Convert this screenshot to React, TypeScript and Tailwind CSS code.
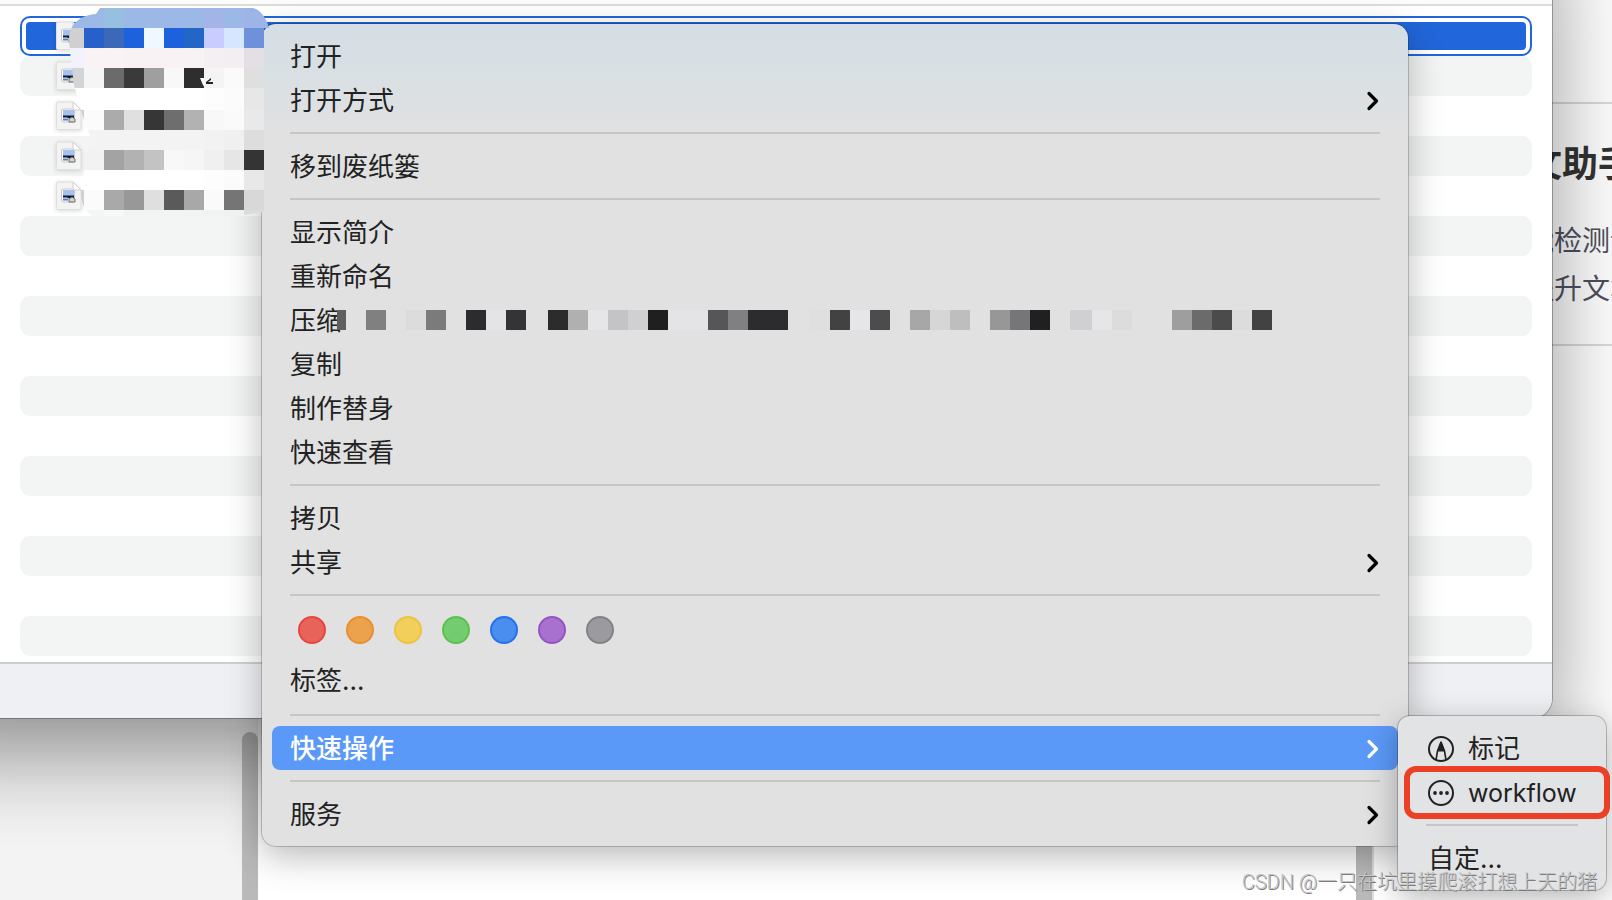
import type { ReactNode } from 'react';

const LIST_ROWS = 16;
const FILE_ROWS = 5;

const MOSAIC = [
  { y: 8, h: 20, cells: ['#9cb8e6', '#9cb8e6', '#96bfe0', '#9cb8e6', '#9cb8e6', '#9cb8e6', '#9cb8e6', '#a3b5e6', '#9cb8e6', '#9cb5e6'] },
  { y: 28, h: 20, cells: ['#d2cfd2', '#2660c8', '#3c68b8', '#1d61dc', '#f0f8ff', '#1d61dc', '#2466c6', '#c9ccff', '#d6e6ff', '#6f90da'] },
  { y: 48, h: 20, cells: ['#f2f2fd', '#f9f3f6', '#f9f3f6', '#f8f2f5', '#f8f2f5', '#f8f2f5', '#f7f2f4', '#f4eff2', '#f2eef1', '#e4dfe4'] },
  { y: 68, h: 20, cells: ['#d3d4d6', '#f5f5f5', '#6b6b6b', '#3a3a3a', '#9f9f9f', '#f8f8f8', '#2e2e2e', '#f4f4f4', '#fafafa', '#dfdfdf'] },
  { y: 88, h: 22, cells: ['#ffffff', '#ffffff', '#ffffff', '#ffffff', '#ffffff', '#ffffff', '#ffffff', '#fdfdfd', '#fbfbfb', '#e7e7e7'] },
  { y: 110, h: 20, cells: ['#cfcfcf', '#fbfbfb', '#ababab', '#e0e0e0', '#363636', '#6e6e6e', '#b2b2b2', '#f8f8f8', '#fafafa', '#e9e9e9'] },
  { y: 130, h: 20, cells: ['#f3f3f3', '#f3f3f3', '#f3f3f3', '#f3f3f3', '#f3f3f3', '#f3f3f3', '#f3f3f3', '#f2f2f2', '#f0f0f0', '#dddddd'] },
  { y: 150, h: 20, cells: ['#f2f2f2', '#f2f2f2', '#a3a3a3', '#b2b2b2', '#c3c3c3', '#f8f8f8', '#f6f6f6', '#f0f0f0', '#e6e6e6', '#343434'] },
  { y: 170, h: 20, cells: ['#ffffff', '#ffffff', '#ffffff', '#ffffff', '#ffffff', '#ffffff', '#ffffff', '#fdfdfd', '#fbfbfb', '#e8e8e8'] },
  { y: 190, h: 20, cells: ['#d0d0d0', '#fbfbfb', '#a9a9a9', '#989898', '#dfdfdf', '#5a5a5a', '#a8a8a8', '#fafafa', '#757575', '#d8d8d8'] },
  { y: 210, h: 6, cells: ['#f3f3f3', '#f5f5f5', '#f8f8f8', '#f3f3f3', '#f3f3f3', '#f3f3f3', '#f3f3f3', '#f2f2f2', '#f0f0f0', '#dcdcdc'] },
];

// x, width, fill
const STRIP: [number, number, string][] = [
  [0, 9, '#5f5f60'],
  [29, 20, '#808081'],
  [69, 20, '#dcdcdd'],
  [89, 20, '#7b7b7c'],
  [129, 20, '#2c2c2e'],
  [149, 20, '#e4e4e6'],
  [169, 20, '#343436'],
  [211, 20, '#2c2c2e'],
  [231, 20, '#b0b0b1'],
  [251, 20, '#e6e6e8'],
  [271, 20, '#c4c4c6'],
  [291, 20, '#d0d0d2'],
  [311, 20, '#1f1f20'],
  [331, 40, '#e4e4e6'],
  [371, 20, '#565658'],
  [391, 20, '#808082'],
  [411, 40, '#2c2c2e'],
  [473, 20, '#dfdfe0'],
  [493, 20, '#424243'],
  [513, 20, '#e6e6e8'],
  [533, 20, '#4c4c4e'],
  [573, 20, '#a7a7a8'],
  [593, 20, '#d6d6d7'],
  [613, 20, '#bebec0'],
  [653, 20, '#979798'],
  [673, 20, '#767678'],
  [693, 20, '#202022'],
  [733, 22, '#d0d0d2'],
  [755, 20, '#e6e6e8'],
  [775, 20, '#dcdcdd'],
  [835, 20, '#9e9e9f'],
  [855, 20, '#6b6b6d'],
  [875, 20, '#4b4b4c'],
  [895, 20, '#dcdcdd'],
  [915, 20, '#424243'],
];

const TAGS = [
  { name: '红色', color: 'bg-[#e8645a] border-[#e5483a]' },
  { name: '橙色', color: 'bg-[#eba24c] border-[#e98f31]' },
  { name: '黄色', color: 'bg-[#f1cf5a] border-[#eec344]' },
  { name: '绿色', color: 'bg-[#73cd70] border-[#5cc24f]' },
  { name: '蓝色', color: 'bg-[#4a8ef0] border-[#2871ee]' },
  { name: '紫色', color: 'bg-[#a971cf] border-[#9653c4]' },
  { name: '灰色', color: 'bg-[#9b9a9f] border-[#838387]' },
];

function FileIcon() {
  return (
    <svg width="26" height="30" viewBox="0 0 26 30" className="drop-shadow-sm" aria-hidden="true">
      <path d="M1.5 1h15.500L25 9v18.500a1 1 0 0 1-1 1H1.500a1 1 0 0 1-1-1V2a1 1 0 0 1 1-1z" fill="#f3f3f3" stroke="#dedede" />
      <path d="M17 1v7a1 1 0 0 0 1 1h7z" fill="#ffffff" stroke="#d0d0d0" />
      <rect x="5.500" y="8" width="13" height="13" rx="2" fill="#fafafa" stroke="#c9c9c9" />
      <rect x="7" y="9" width="11" height="6" fill="#a3c3ee" />
      <path d="M7 14.500h11v3h-5l-2-1H7z" fill="#10182c" />
      <path d="M7 17.500h5v2H7z" fill="#5b81bf" />
      <path d="M13 18l3-2 3 2v3h-6z" fill="#d4d4d4" stroke="#6f6f6f" strokeWidth="1" />
    </svg>
  );
}

function Chevron() {
  return (
    <svg width="14" height="20" viewBox="0 0 14 20" fill="none" aria-hidden="true">
      <path d="M3 2.500l7.500 7.500L3 17.500" stroke="currentColor" strokeWidth="3.200" strokeLinecap="round" strokeLinejoin="round" />
    </svg>
  );
}

function MarkupIcon() {
  return (
    <svg width="26" height="26" viewBox="0 0 26 26" fill="none" stroke="currentColor" aria-hidden="true">
      <circle cx="13" cy="13" r="12" strokeWidth="2" />
      <path d="M8 24l1.500-9L13 6l3.500 9L18 24" strokeWidth="1.600" strokeLinejoin="round" />
      <path d="M9.500 15L13 6l3.500 9z" fill="currentColor" strokeWidth="1" />
    </svg>
  );
}

function MoreIcon() {
  return (
    <svg width="26" height="26" viewBox="0 0 26 26" fill="currentColor" aria-hidden="true">
      <circle cx="13" cy="13" r="12" fill="none" stroke="currentColor" strokeWidth="2" />
      <circle cx="7" cy="13" r="1.900" />
      <circle cx="13" cy="13" r="1.900" />
      <circle cx="19" cy="13" r="1.900" />
    </svg>
  );
}

function MenuItem({ children, arrow, active }: { children: ReactNode; arrow?: boolean; active?: boolean }) {
  return (
    <button
      type="button"
      role="menuitem"
      className={`relative flex h-11 w-full items-center rounded-lg px-[18px] pt-0.5 text-left ${
        active ? 'bg-[#5b99f8] font-medium text-white' : ''
      }`}
    >
      {children}
      {arrow && (
        <span className={`ml-auto ${active ? 'text-white' : 'text-black'}`}>
          <Chevron />
        </span>
      )}
    </button>
  );
}

function Separator() {
  return <hr className="mx-[18px] my-[10px] h-0.5 border-0 bg-[#c6c6c6]" />;
}

function BackgroundPage() {
  return (
    <div className="flex h-full">
      <div className="flex w-[258px] shrink-0 justify-end bg-[#f3f3f3] pt-[732px]">
        <div className="w-4 rounded-t-full bg-[#b9b9b9]" />
      </div>
      <div className="flex-1 bg-white" />
      <div className="w-[18px] border-r-2 border-[#dedede] bg-[#b9b9b9]" />
      <div className="w-[238px] shrink-0 overflow-hidden whitespace-nowrap bg-white pt-[102px]">
        <section className="h-[244px] border-y-2 border-[#d9d9de] pt-9 pl-[152px]">
          <h2 className="text-[36px] leading-[48px] font-bold text-[#333333]">文助手</h2>
          <p className="mt-[29px] text-[28px] leading-[48px] text-[#4f4f60]">
            能检测语
            <br />
            提升文本
          </p>
        </section>
      </div>
    </div>
  );
}

// The window runs past the top and left edges of the screen.
function FinderWindow() {
  return (
    <div className="absolute -top-24 right-[60px] -left-24 overflow-hidden rounded-br-[20px] bg-white pt-24 shadow-[0_0_0_1px_rgba(0,0,0,0.28),0_36px_90px_rgba(0,0,0,0.42)]">
      <div className="h-1.5 border-b-2 border-[#dcdcdc] bg-[#fcfcfc]" />
      <ul className="pt-[10px] pr-5 pb-1.5 pl-[116px]">
        {Array.from({ length: LIST_ROWS }, (_, i) => (
          <li
            key={i}
            className={`h-10 rounded-[10px] ${
              i === 0 ? 'border-2 border-[#2166da] p-1' : i % 2 === 1 ? 'bg-[#f3f5f5]' : ''
            }`}
          >
            {i === 0 ? (
              <div className="flex h-full items-center rounded bg-[#2166da] pl-[30px]">
                <FileIcon />
              </div>
            ) : (
              i < FILE_ROWS && (
                <div className="flex h-full items-center pl-9">
                  <FileIcon />
                </div>
              )
            )}
          </li>
        ))}
      </ul>
      <div className="h-14 border-t-2 border-[#cfcfd3] bg-[#eff0f3]" />
    </div>
  );
}

function NameMosaic() {
  return (
    <svg width="270" height="216" viewBox="0 0 270 216" className="pointer-events-none absolute top-0 left-0" aria-hidden="true">
      <defs>
        <clipPath id="blob">
          <path d="M100 8H253C260 10 266 17 269 28H264V212L240 216H92C84 210 81 203 81 192C81 183 82 178 84 172L90 136C85 124 82 114 79 104C77 94 74 88 73 78C73 70 71 65 71 60C70 52 69 45 69 38C70 24 80 15 96 14Z" />
        </clipPath>
      </defs>
      <g clipPath="url(#blob)" shapeRendering="crispEdges">
        {MOSAIC.map((row) =>
          row.cells.map((fill, i) => (
            <rect
              key={`${row.y}-${i}`}
              x={64 + i * 20}
              y={row.y}
              width={i === 9 && row.y === 8 ? 26 : 20}
              height={row.h}
              fill={fill}
            />
          ))
        )}
      </g>
      <path d="M200 78h4l1 10-2-3z" fill="#ffffff" />
      <path d="M206 82l5-4v2l-3 2h5v2h-7z" fill="#222222" />
    </svg>
  );
}

function ContextMenu() {
  return (
    <div
      role="menu"
      className="absolute top-6 right-[204px] left-[262px] rounded-[14px] bg-[#e1e1e1] bg-[linear-gradient(to_bottom,#d5dde5_0px,#d9e0e3_50px,#e1e1e2_110px)] bg-no-repeat p-[10px] text-[#222222] shadow-[0_0_0_1px_rgba(0,0,0,0.2),0_10px_36px_rgba(0,0,0,0.28)]"
    >
      <MenuItem>打开</MenuItem>
      <MenuItem arrow>打开方式</MenuItem>
      <Separator />
      <MenuItem>移到废纸篓</MenuItem>
      <Separator />
      <MenuItem>显示简介</MenuItem>
      <MenuItem>重新命名</MenuItem>
      <MenuItem>
        压缩
        <svg width="935" height="20" viewBox="0 0 935 20" className="absolute top-3 left-[65px]" shapeRendering="crispEdges" aria-hidden="true">
          {STRIP.map(([x, w, fill]) => (
            <rect key={x} x={x} y="0" width={w} height="20" fill={fill} />
          ))}
        </svg>
      </MenuItem>
      <MenuItem>复制</MenuItem>
      <MenuItem>制作替身</MenuItem>
      <MenuItem>快速查看</MenuItem>
      <Separator />
      <MenuItem>拷贝</MenuItem>
      <MenuItem arrow>共享</MenuItem>
      <Separator />
      <div className="flex h-[52px] gap-5 px-[26px] pt-[10px]">
        {TAGS.map((tag) => (
          <button key={tag.name} type="button" aria-label={tag.name} className={`size-7 rounded-full border-2 ${tag.color}`} />
        ))}
      </div>
      <div className="pb-0.5">
        <MenuItem>标签…</MenuItem>
      </div>
      <Separator />
      <MenuItem active arrow>
        快速操作
      </MenuItem>
      <Separator />
      <MenuItem arrow>服务</MenuItem>
    </div>
  );
}

function QuickActions() {
  return (
    <div
      role="menu"
      className="absolute top-[716px] right-1.5 w-[208px] rounded-xl bg-[#e2e3e5] py-[10px] pr-[10px] pl-3 text-[#222222] shadow-[0_0_0_1px_rgba(0,0,0,0.22),0_8px_32px_rgba(0,0,0,0.3)]"
    >
      <MenuItem>
        <span className="flex items-center gap-[14px]">
          <MarkupIcon />
          标记
        </span>
      </MenuItem>
      <MenuItem>
        <span className="flex items-center gap-[14px]">
          <MoreIcon />
          <span className="text-[25px]">workflow</span>
        </span>
      </MenuItem>
      <hr className="mr-[18px] ml-4 my-[10px] h-0.5 border-0 bg-[#c6c6c8]" />
      <MenuItem>自定…</MenuItem>
      <div className="pointer-events-none absolute top-[50px] -right-1 left-1.5 h-[53px] rounded-xl border-6 border-[#ec4026]" />
    </div>
  );
}

export default function App() {
  return (
    <div className="relative h-screen w-full overflow-hidden bg-white font-[Inter,'Noto_Sans_CJK_SC',sans-serif] text-[26px] leading-none">
      <BackgroundPage />
      <FinderWindow />
      <ContextMenu />
      <NameMosaic />
      <QuickActions />
      <p className="absolute right-[15px] bottom-[3px] font-[Roboto,'Noto_Sans_CJK_SC',sans-serif] text-xl leading-[30px] font-light whitespace-nowrap text-[#c4c4c4] [text-shadow:1px_1px_0_#7d7d7d]">
        CSDN @一只在坑里摸爬滚打想上天的猪
      </p>
    </div>
  );
}
